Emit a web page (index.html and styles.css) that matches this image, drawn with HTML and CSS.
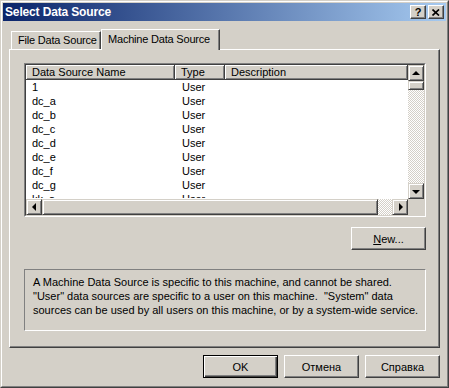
FILE: index.html
```html
<!DOCTYPE html>
<html lang="ru">
<head>
  <meta charset="UTF-8" />
  <title>Select Data Source</title>
  <link rel="stylesheet" href="styles.css">
</head>
<body>
  <div class="window">
    <div class="window-inner">
      <div class="titlebar">
        <span class="title">Select Data Source</span>
        <span class="cap-btn help">?</span>
        <span class="cap-btn close">
          <svg width="8" height="7" viewBox="0 0 8 7"><path d="M0.5 0.5 L7 6.5 M7 0.5 L0.5 6.5" stroke="#000" stroke-width="1.7" fill="none"/></svg>
        </span>
      </div>

      <div class="tabs">
        <div class="tab">File Data Source</div>
        <div class="tab active">Machine Data Source</div>
      </div>

      <div class="panel">
        <div class="list">
          <div class="list-inner">
            <div class="list-main">
              <div class="header">
                <div class="hcell">Data Source Name</div>
                <div class="hcell">Type</div>
                <div class="hcell">Description</div>
              </div>
              <div class="rows" id="rows"></div>
            </div>
            <div class="vscroll">
              <div class="sbtn"><span class="arrow up"></span></div>
              <div class="vthumb"></div>
              <div class="track"></div>
              <div class="sbtn"><span class="arrow down"></span></div>
            </div>
            <div class="hscroll">
              <div class="sbtn"><span class="arrow left"></span></div>
              <div class="hthumb"></div>
              <div class="track"></div>
              <div class="sbtn"><span class="arrow right"></span></div>
            </div>
            <div class="corner"></div>
          </div>
        </div>

        <div class="new-row">
          <button class="btn"><u>N</u>ew...</button>
        </div>

        <div class="info">
          A Machine Data Source is specific to this machine, and cannot be shared.<br>
          &quot;User&quot; data sources are specific to a user on this machine. &nbsp;&quot;System&quot; data<br>
          sources can be used by all users on this machine, or by a system-wide service.
        </div>
      </div>

      <div class="buttons">
        <button class="btn default">OK</button>
        <button class="btn">Отмена</button>
        <button class="btn">Справка</button>
      </div>
    </div>
  </div>

  <script>
    const sources = ["1", "dc_a", "dc_b", "dc_c", "dc_d", "dc_e", "dc_f", "dc_g", "kk_a"];
    const rowsEl = document.getElementById("rows");

    sources.forEach(name => {
      const row = document.createElement("div");
      row.className = "row";
      row.innerHTML = `<span>${name}</span><span>User</span><span></span>`;
      rowsEl.appendChild(row);
    });
  </script>
</body>
</html>
```

FILE: styles.css
```css
body {
  margin: 0;
  font-family: "Liberation Sans", Arial, sans-serif;
  font-size: 11px;
  color: #000;
  background: #d4d0c8;
}
.window {
  width: 449px;
  height: 388px;
  box-sizing: border-box;
  border: 1px solid;
  border-color: #d4d0c8 #404040 #404040 #d4d0c8;
}
.window-inner {
  height: 100%;
  box-sizing: border-box;
  border: 1px solid;
  border-color: #fff #808080 #808080 #fff;
  padding: 1px;
}
.titlebar {
  height: 18px;
  display: flex;
  align-items: center;
  gap: 2px;
  padding: 0 2px;
  background: linear-gradient(to right, #0a246a, #a6caf0);
}
.title {
  flex: 1;
  color: #fff;
  font-weight: bold;
  font-size: 12px;
  letter-spacing: -0.15px;
}
.cap-btn {
  width: 14px;
  height: 12px;
  display: flex;
  align-items: center;
  justify-content: center;
  background: #d4d0c8;
  border: 1px solid;
  border-color: #fff #404040 #404040 #fff;
  box-shadow: inset -1px -1px #808080;
  font-weight: bold;
  font-size: 11px;
  line-height: 12px;
}
.tabs {
  display: flex;
  align-items: flex-end;
  height: 20px;
  margin-top: 8px;
  padding-left: 8px;
}
.tab {
  width: 90px;
  height: 17px;
  box-sizing: content-box;
  line-height: 17px;
  padding-left: 6px;
  border: 1px solid;
  border-bottom: none;
  border-color: #fff #404040 #fff #fff;
  box-shadow: inset -1px 0 #808080;
  white-space: nowrap;
  overflow: hidden;
  letter-spacing: -0.2px;
}
.tab:first-child {
  width: 82px;
}
.tab.active {
  position: relative;
  z-index: 1;
  width: 111px;
  height: 20px;
  line-height: 18px;
  margin-bottom: -1px;
  background: #d4d0c8;
}
.panel {
  margin: 0 6px;
  height: 299px;
  box-sizing: border-box;
  border: 1px solid;
  border-color: #fff #404040 #404040 #fff;
  box-shadow: inset -1px -1px #808080;
  padding: 13px 13px 16px 14px;
}
.list {
  height: 154px;
  box-sizing: border-box;
  border: 1px solid;
  border-color: #808080 #fff #fff #808080;
}
.list-inner {
  height: 100%;
  box-sizing: border-box;
  border: 1px solid;
  border-color: #404040 #d4d0c8 #d4d0c8 #404040;
  display: grid;
  grid-template-columns: 1fr 16px;
  grid-template-rows: 1fr 16px;
  background: #fff;
}
.list-main {
  overflow: hidden;
}
.header,
.row {
  display: grid;
  grid-template-columns: 149px 50px 1fr;
}
.hcell {
  height: 14px;
  line-height: 14px;
  padding-left: 6px;
  background: #d4d0c8;
  border: 1px solid;
  border-color: #fff #404040 #404040 #fff;
  border-left: none;
  border-top: none;
  box-shadow: inset 1px 1px #fff, inset -1px -1px #808080;
}
.rows {
  height: 118px;
  overflow: hidden;
}
.row {
  height: 14px;
  line-height: 14px;
}
.row span {
  padding-left: 6px;
}
.row span:nth-child(2) {
  padding-left: 7px;
}
.vscroll {
  display: flex;
  flex-direction: column;
  background: #d4d0c8;
}
.hscroll {
  display: flex;
  background: #d4d0c8;
}
.corner {
  background: #d4d0c8;
}
.track {
  flex: 1;
  background: repeating-conic-gradient(#fff 0 25%, #d4d0c8 0 50%) 0 0 / 2px 2px;
}
.sbtn,
.vthumb,
.hthumb {
  box-sizing: border-box;
  background: #d4d0c8;
  border: 1px solid;
  border-color: #d4d0c8 #404040 #404040 #d4d0c8;
  box-shadow: inset 1px 1px #fff, inset -1px -1px #808080;
}
.sbtn {
  width: 16px;
  height: 16px;
  display: flex;
  align-items: center;
  justify-content: center;
}
.vthumb {
  height: 9px;
}
.hthumb {
  width: 336px;
}
.arrow {
  width: 0;
  height: 0;
  border: 4px solid transparent;
}
.arrow.up {
  border-bottom-color: #000;
  border-top-width: 0;
  margin-top: -1px;
}
.arrow.down {
  border-top-color: #000;
  border-bottom-width: 0;
  margin-top: 1px;
}
.arrow.left {
  border-right-color: #000;
  border-left-width: 0;
  margin-left: -1px;
}
.arrow.right {
  border-left-color: #000;
  border-right-width: 0;
  margin-left: 1px;
}
.new-row {
  display: flex;
  justify-content: flex-end;
  margin-top: 10px;
}
.btn {
  width: 75px;
  height: 23px;
  padding: 0;
  font: inherit;
  color: #000;
  background: #d4d0c8;
  border: 1px solid;
  border-color: #fff #404040 #404040 #fff;
  box-shadow: inset -1px -1px #808080;
}
.btn.default {
  border-color: #000;
  box-shadow: inset 1px 1px #fff, inset -1px -1px #404040, inset -2px -2px #808080;
}
.info {
  height: 62px;
  box-sizing: border-box;
  margin-top: 19px;
  padding: 5px 8px;
  line-height: 14px;
  white-space: nowrap;
  border: 1px solid;
  border-color: #808080 #fff #fff #808080;
}
.buttons {
  display: flex;
  justify-content: flex-end;
  gap: 6px;
  margin-top: 7px;
  padding-right: 6px;
}
```
